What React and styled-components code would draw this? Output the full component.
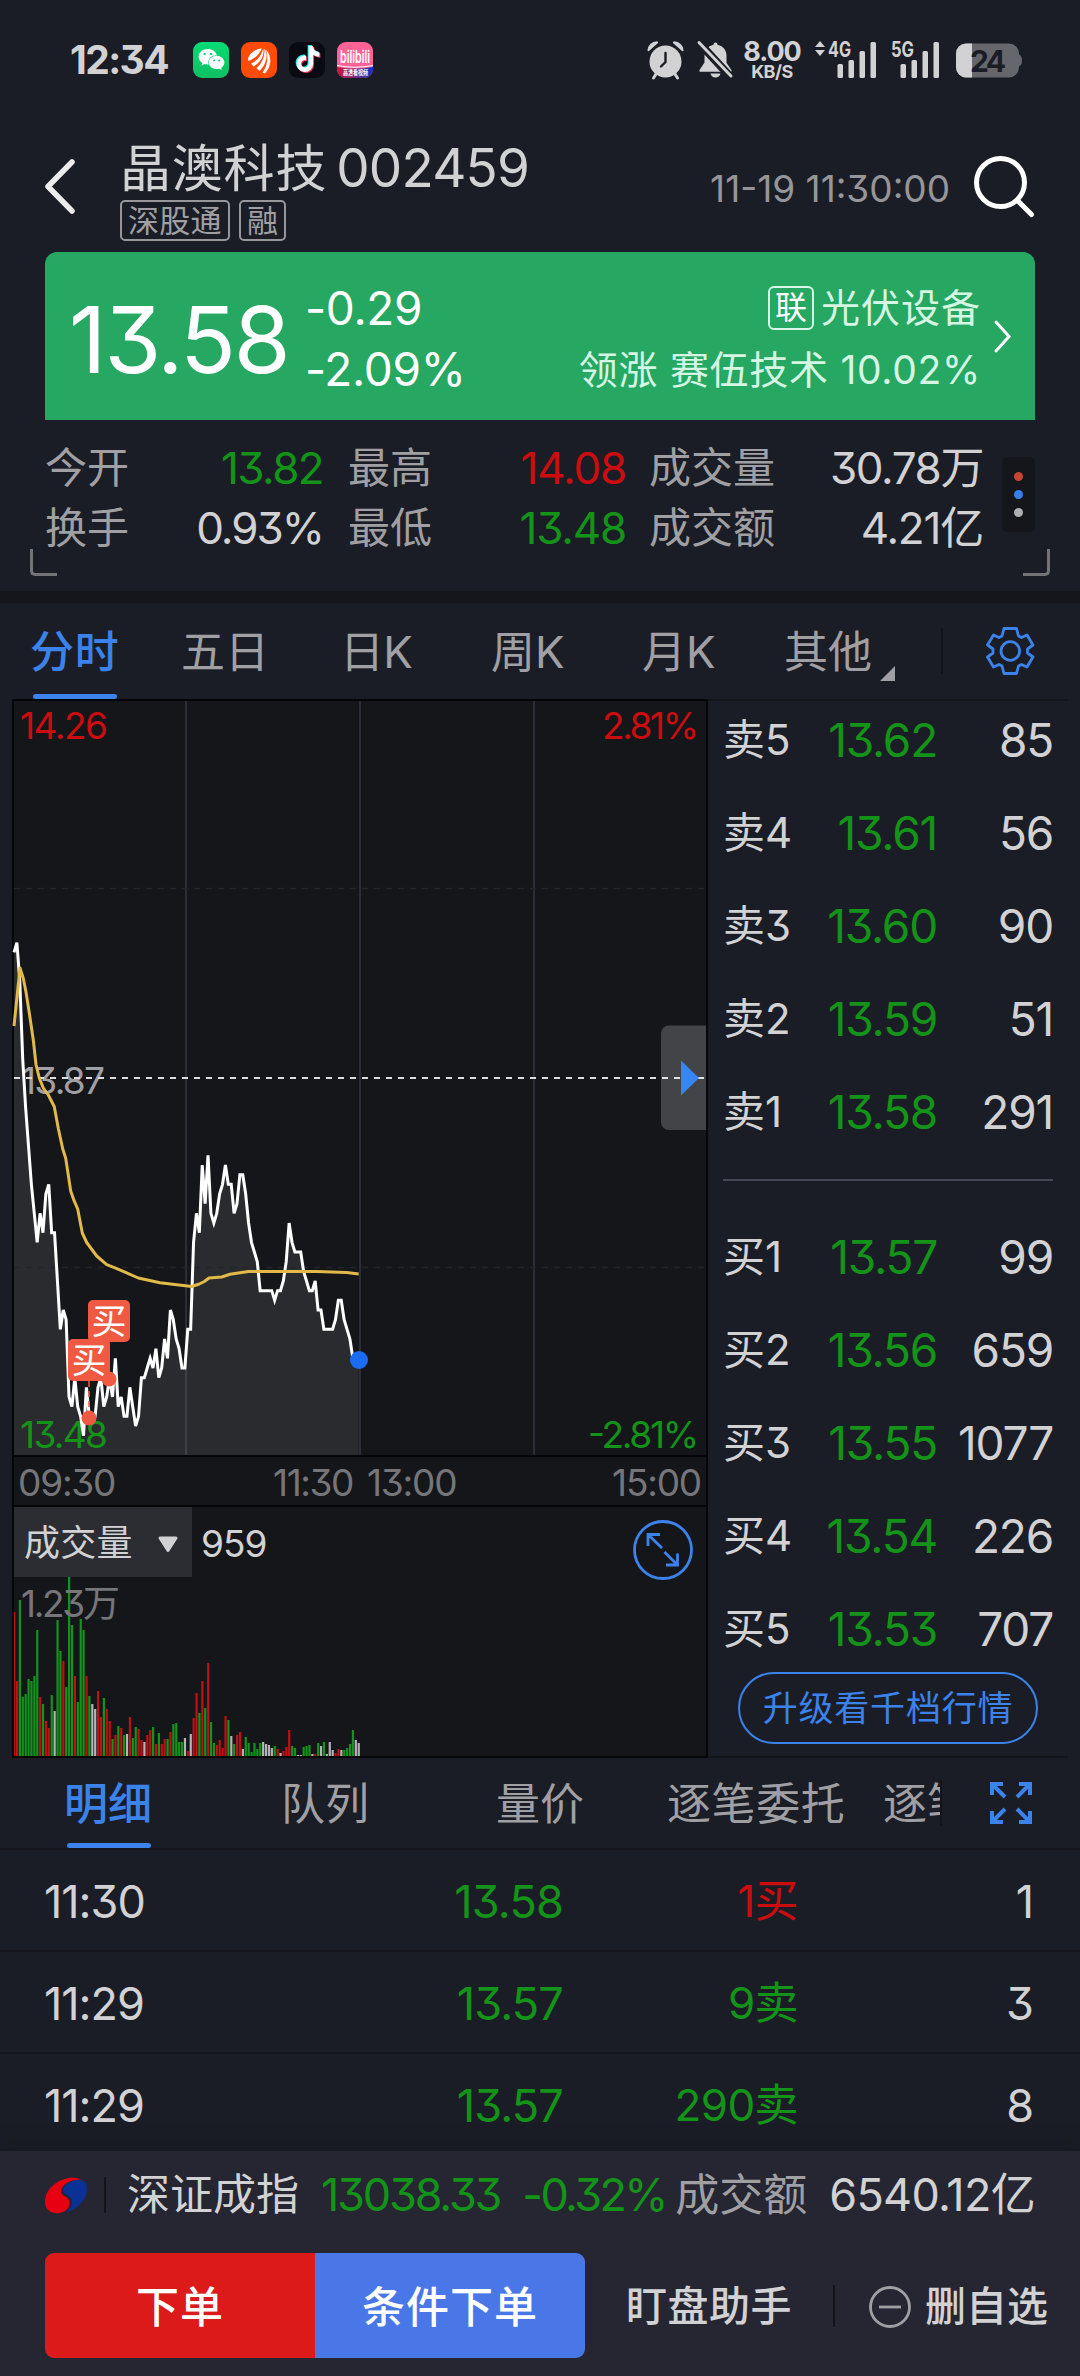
import React from "react";
import styled, { createGlobalStyle } from "styled-components";
import { FaTiktok, FaWeixin } from "react-icons/fa6";

const GREEN = "#149319";
const RED = "#cb0d10";
const BLUE = "#3b83ea";
const TEXT = "#d2d2d4";
const MUTED = "#a0a0a4";

const GlobalStyle = createGlobalStyle`
  * { box-sizing: border-box; }
  body {
    margin: 0;
    background: #1b1d26;
    color: ${TEXT};
    font-family: Inter, "Noto Sans CJK SC", sans-serif;
    font-feature-settings: "cv09" 1;
  }
  svg { display: block; flex: none; overflow: visible; }
`;

const Page = styled.div`
  width: 1080px;
  height: 2376px;
  overflow: hidden;
  display: flex;
  flex-direction: column;
`;

const Label = styled.span`
  flex: none;
  white-space: nowrap;
  line-height: 1.2;
  font-size: ${(p) => p.$size || 44}px;
  letter-spacing: ${(p) => p.$track || 0}px;
  font-weight: ${(p) => p.$weight || 400};
  color: ${(p) => p.$color || TEXT};
  margin-left: ${(p) => p.$left || 0}px;
`;

/* status bar */

const StatusBar = styled.div`
  height: 120px;
  padding: 0 58px 0 70px;
  display: flex;
  align-items: center;
  justify-content: space-between;
`;

const StatusGroup = styled.div`
  display: flex;
  align-items: center;
  gap: ${(p) => p.$gap}px;
`;

const AppTile = styled.div`
  width: 36px;
  height: 36px;
  border-radius: 9px;
  background: ${(p) => p.$bg};
  color: #fff;
  display: flex;
  align-items: center;
  justify-content: center;
`;

const Clock = styled(Label)`
  margin-right: 12px;
  width: 99px;
`;

const NetSpeed = styled.div`
  width: 58px;
  margin-left: -4px;
  padding-top: 1px;
  display: flex;
  flex-direction: column;
  align-items: center;
  color: ${TEXT};

  b {
    font-weight: 700;
    font-size: 27px;
    line-height: 22px;
    letter-spacing: -1px;
  }
  i {
    font-style: normal;
    font-weight: 700;
    font-size: 18px;
    line-height: 17px;
    letter-spacing: -0.5px;
  }
`;

const Battery = styled.svg`
  margin-left: 2px;
`;

/* header */

const Header = styled.div`
  height: 132px;
  padding: 0 45px;
  display: flex;
`;

const BackIcon = styled.svg`
  margin: 37px 43px 0 -2px;
`;

const TitleBlock = styled.div`
  flex: 1;
  padding-top: 18px;
`;

const Title = styled.div`
  height: 62px;
  display: flex;
  align-items: center;
  gap: 9px;
`;

const Tags = styled.div`
  display: flex;
  gap: 9px;
`;

const Tag = styled.span`
  height: 41px;
  padding: 0 6px;
  border: 2px solid #96969b;
  border-radius: 5px;
  color: ${MUTED};
  font-size: 31px;
  line-height: 37px;
  letter-spacing: 0.3px;
`;

const Stamp = styled(Label)`
  margin: 47px 21px 0 0;
`;

const SearchIcon = styled.svg`
  margin-top: 34px;
`;

/* quote card */

const QuoteCard = styled.div`
  height: 168px;
  margin: 0 45px;
  padding: 0 24px;
  border-radius: 12px 12px 0 0;
  background: #26a762;
  display: flex;
  align-items: center;
`;

const Pair = styled.div`
  padding-top: 5px;
  display: flex;
  flex-direction: column;
  align-items: ${(p) => (p.$end ? "flex-end" : "flex-start")};
  margin: ${(p) => (p.$end ? "0 10px 0 auto" : "0")};

  > * {
    height: 61px;
    line-height: 61px;
  }
`;

const Price = styled(Label)`
  width: 235px;
  margin-top: 8px;
`;

const Sector = styled.div`
  display: flex;
  align-items: center;
  gap: 7px;
`;

const LinkBox = styled.span`
  width: 46px;
  height: 44px;
  border: 2px solid #d9f7e6;
  border-radius: 6px;
  color: #fff;
  font-size: 32px;
  line-height: 40px;
  text-align: center;
`;

/* stats */

const Stats = styled.div`
  height: 171px;
  padding: 18px 45px 0;
  display: flex;
  position: relative;
`;

const StatCol = styled.div`
  width: ${(p) => p.$w}px;
  margin-right: ${(p) => p.$gap}px;
`;

const StatRow = styled.div`
  height: 60px;
  display: flex;
  align-items: center;
  justify-content: space-between;
`;

const Dots = styled.div`
  width: 33px;
  height: 75px;
  margin-top: 19px;
  border-radius: 6px;
  background: #15161b;
  display: flex;
  flex-direction: column;
  align-items: center;
  justify-content: center;
  gap: 9px;
`;

const Dot = styled.i`
  width: 9px;
  height: 9px;
  border-radius: 50%;
  background: ${(p) => p.$c};
`;

const Corner = styled.i`
  position: absolute;
  bottom: 15px;
  ${(p) => p.$side}: 30px;
  width: 27px;
  height: 27px;
  border-bottom: 3px solid #737378;
  border-${(p) => p.$side}: 3px solid #737378;
  border-bottom-${(p) => p.$side}-radius: 5px;
`;

const Band = styled.div`
  height: 12px;
  background: #15161b;
`;

/* tabs */

const PeriodTabs = styled.div`
  height: 96px;
  padding: 0 45px 0 30px;
  display: flex;
  align-items: center;
`;

const Tab = styled.div`
  width: ${(p) => p.$w}px;
  height: 100%;
  display: flex;
  flex-direction: column;
  align-items: flex-start;
  overflow: hidden;
  white-space: nowrap;
  font-size: 44px;
  letter-spacing: ${(p) => p.$track || 0}px;
  line-height: ${(p) => p.$lh || 99}px;
  font-weight: ${(p) => (p.$on ? 500 : 400)};
  color: ${(p) => (p.$on ? BLUE : MUTED)};
`;

const TabText = styled.span`
  flex: 1;
  min-height: 0;
`;

const TabMark = styled.i`
  width: 84px;
  height: 5px;
  margin-left: 3px;
  border-radius: 3px;
  background: ${BLUE};
`;

const MoreMark = styled.svg`
  margin: 44px 46px 0 0;
`;

const Rule = styled.i`
  width: 2px;
  height: ${(p) => p.$h}px;
  background: #13141a;
`;

const EndIcon = styled.svg`
  margin-left: auto;
`;

/* chart and order book */

const Market = styled.div`
  height: 1059px;
  padding-left: 12px;
  display: flex;
`;

const ChartPanel = styled.div`
  width: 696px;
  border: 2px solid #05060a;
  background: #15161a;
  display: flex;
  flex-direction: column;
`;

const TimeAxis = styled.div`
  height: 52px;
  border: solid #05060a;
  border-width: 2px 0;
  padding: 4px 5px 0 4px;
  display: grid;
  grid-template-columns: 255px 94px 1fr auto;
  align-items: center;
`;

const VolumeHead = styled.div`
  height: 70px;
  display: flex;
  align-items: center;
`;

const VolumePick = styled.div`
  width: 178px;
  height: 70px;
  padding: 4px 14px 0 10px;
  background: #2c2d33;
  display: flex;
  align-items: center;
  justify-content: space-between;
`;

const VolumeNow = styled(Label)`
  padding-top: 4px;
`;

const Expand = styled.svg`
  margin: 16px 13px 0 auto;
`;

const Book = styled.div`
  flex: 1;
  margin-right: 12px;
  padding: 0 15px;
  border: solid #14151b;
  border-width: 2px 0;
`;

const BookRow = styled.div`
  height: 93px;
  display: grid;
  grid-template-columns: 80px 134px 1fr;
  align-items: center;

  > :nth-child(n + 2) {
    text-align: right;
  }
`;

const BookSide = styled.div`
  margin-top: ${(p) => p.$top}px;
`;

const BookRule = styled.div`
  height: 2px;
  margin-top: 20px;
  background: #474856;
`;

const Upgrade = styled.div`
  height: 72px;
  width: 300px;
  margin: -4px auto 0;
  border: 2px solid ${BLUE};
  border-radius: 36px;
  color: ${BLUE};
  font-size: 35px;
  letter-spacing: 0.8px;
  line-height: 69px;
  text-align: center;
`;

/* trade list */

const DetailTabs = styled.div`
  height: 92px;
  padding: 0 48px 0 64px;
  border-bottom: 2px solid #15161d;
  display: flex;
  align-items: center;
`;

const Trades = styled.div`
  flex: 1;
  overflow: hidden;
`;

const TradeRow = styled.div`
  height: 102px;
  padding: 3px 46px 0 44px;
  border-bottom: 2px solid #15161d;
  display: grid;
  grid-template-columns: 220px 299px 235px 1fr;
  align-items: center;

  > :nth-child(n + 2) {
    text-align: right;
  }
`;

/* footer */

const Footer = styled.div`
  height: 225px;
  background: #252632;
  box-shadow: 0 -4px 16px rgba(20, 21, 28, 0.5);
`;

const IndexRow = styled.div`
  height: 102px;
  padding: 0 45px 14px;
  display: flex;
  align-items: center;

  ${Rule} {
    margin: 0 21px 0 17px;
  }
`;

const Turnover = styled.div`
  margin-left: auto;
  display: flex;
  align-items: center;
`;

const Actions = styled.div`
  height: 105px;
  padding-left: 45px;
  display: flex;
  align-items: center;
`;

const OrderButton = styled.div`
  width: 270px;
  height: 105px;
  border-radius: ${(p) => (p.$left ? "9px 0 0 9px" : "0 9px 9px 0")};
  background: ${(p) => p.$bg};
  color: #fff;
  font-size: 43px;
  letter-spacing: 1px;
  font-weight: 500;
  line-height: 109px;
  text-align: center;
`;

const Watch = styled(Label)`
  margin: 3px 41px 0;
`;

const Remove = styled.div`
  margin-left: 34px;
  padding-top: 2px;
  display: flex;
  align-items: center;
  gap: 14px;
`;

// hundredths below the previous close, one value a minute
const PREV = 13.87;
const drops = [
  -13, -14, -10, -2, 3, 7, 11, 14, 17, 14, 16, 12, 11, 16, 16, 21, 26, 24, 25,
  33, 34, 31, 34, 35, 37, 32, 35, 35, 35, 32, 31, 34, 33, 31, 33, 29, 34, 33,
  35, 35, 32, 34, 36, 35, 31, 31, 30, 29, 30, 28, 31, 30, 27, 29, 24, 25, 27,
  28, 30, 30, 26, 26, 17, 14, 16, 9, 13, 8, 14, 15, 14, 12, 11, 9, 11, 11, 14,
  13, 10, 10, 12, 15, 17, 18, 19, 22, 22, 22, 22, 22, 23, 22, 22, 21, 19, 15,
  17, 18, 18, 18, 20, 21, 22, 22, 21, 24, 24, 26, 26, 26, 26, 25, 23, 23, 25,
  26, 27, 29, 29, 29,
];

const STEP = 2.896;
const TICK = 9.667;
const MID = 377;
const linePoints = drops.map((d, i) => `${i * STEP},${MID + d * TICK}`).join(" ");

const average =
  "0,325 6,267 9.3,277.5 12,291 15.3,312 19.3,339 22,363.5 25.3,377 29.3,387 34.3,394 40.3,405.7 44.3,427.5 48.7,447.8 51.7,457.3 56.7,490 60,499.4 63.7,508 68.3,532 72.7,541.5 82.7,555 92.7,563.7 101,566.8 112.7,571.8 124.3,577 146,581.7 177.7,585.5 185.3,583 190.3,580.5 195,577 207.7,576 216,573.3 234.3,570.6 302.7,570.6 332.7,571.4 344.7,573";

// direction of the minute, then its height
const volumes =
  "r144 r75 g156 g59 g62 g77 g75 g80 g126 r59 g52 r35 r28 g61 w45 g136 g105 r95 g69 g183 g131 r80 g54 g137 g126 r80 g60 w52 w47 r65 r39 g58 r47 r35 g17 r21 g30 r28 g21 w22 r39 g18 g29 r27 r16 w14 r21 r26 g29 r12 g23 r12 r17 g17 r24 g32 g33 g14 g14 w18 r5 w22 r38 r63 g43 r75 g48 r93 g34 g13 r11 r16 r8 r40 g36 w20 g12 r21 r24 w7 g19 g13 g4 g13 g7 g13 w14 w12 w11 w8 g10 r7 w3 r5 r9 r26 g10 g8 w1 w1 g9 g10 g11 w2 r2 g13 w10 g14 w2 w14 w6 r3 r7 w6 g6 g8 g12 g26 w16 w13".split(
    " "
  );
const volumeFill = { r: "#c20f12", g: "#12951a", w: "#b4b4b7" };

const asks = [
  ["卖5", "13.62", "85"],
  ["卖4", "13.61", "56"],
  ["卖3", "13.60", "90"],
  ["卖2", "13.59", "51"],
  ["卖1", "13.58", "291"],
];
const bids = [
  ["买1", "13.57", "99"],
  ["买2", "13.56", "659"],
  ["买3", "13.55", "1077"],
  ["买4", "13.54", "226"],
  ["买5", "13.53", "707"],
];
const trades = [
  ["11:30", "13.58", "1买", "1", RED],
  ["11:29", "13.57", "9卖", "3", GREEN],
  ["11:29", "13.57", "290卖", "8", GREEN],
];

const Signal = ({ name, arrows }) => (
  <svg width={arrows ? 62 : 49} height="38" viewBox={arrows ? "-13 0 62 38" : "0 0 49 38"} fill={TEXT}>
    {arrows && <path d="M-8 0l5 6h-10zM-8 15l5-6h-10z" />}
    <text x="0" y="16" fontSize="21" fontWeight="700" textLength="23" lengthAdjust="spacingAndGlyphs">
      {name}
    </text>
    <rect x="9.500" y="23" width="5.500" height="14" rx="1.500" />
    <rect x="20.500" y="19" width="5.500" height="18" rx="1.500" />
    <rect x="31.500" y="10" width="5.500" height="27" rx="1.500" />
    <rect x="42.500" y="1" width="5.500" height="36" rx="1.500" />
  </svg>
);

const Status = () => (
  <StatusBar>
    <StatusGroup $gap={12}>
      <Clock $size={39} $weight={700} $track={-1.6}>12:34</Clock>
      <AppTile $bg="linear-gradient(#07dc74, #0fc062)">
        <FaWeixin size={27} />
      </AppTile>
      <AppTile $bg="#ff4a08">
        <svg width="36" height="36" viewBox="0 0 36 36" fill="#fff">
          <path d="M7 17C8 11.500 13 7.500 21 6.200 18 12.500 14 16.500 7.500 19Z" />
          <path d="M10 21.500C17 18.500 20.800 12.500 22.200 6.500 23.800 13 19.500 21 12.500 24.500Z" />
          <path d="M15.500 26C21.500 21 23.800 14 23.500 6.500 27.800 13 25.300 22.500 18.500 29Z" />
          <path d="M21.500 30.500C26.500 24 27.500 15 25 7.500 31 14 31 24 24 31.500Z" />
        </svg>
      </AppTile>
      <AppTile $bg="#090a12">
        <svg width="36" height="36" viewBox="0 0 36 36">
          <FaTiktok x="5" y="3" size={26} color="#25e6e6" />
          <FaTiktok x="7" y="5" size={26} color="#f0385a" />
          <FaTiktok x="6" y="4" size={26} color="#fff" />
        </svg>
      </AppTile>
      <AppTile $bg="#ff6396">
        <svg width="36" height="36" viewBox="0 0 36 36">
          <defs>
            <linearGradient id="strip">
              <stop offset="0" stopColor="#d3153b" />
              <stop offset="1" stopColor="#0b35c9" />
            </linearGradient>
            <clipPath id="tile">
              <rect width="36" height="36" rx="9" />
            </clipPath>
          </defs>
          <text x="3" y="21" fill="#fff" fontSize="17" fontWeight="600" textLength="30" lengthAdjust="spacingAndGlyphs">
            bilibili
          </text>
          <path d="M0 25Q18 28 36 25V36H0Z" fill="url(#strip)" clipPath="url(#tile)" />
          <path d="M0 23.500Q18 27 36 23.500" fill="none" stroke="#fff" />
          <text x="6" y="33" fill="#fff" fontSize="7" fontWeight="700" textLength="25" lengthAdjust="spacingAndGlyphs">
            高清看视频
          </text>
        </svg>
      </AppTile>
    </StatusGroup>
    <StatusGroup $gap={14}>
      <svg width="37" height="38" viewBox="0 0 37 38" fill={TEXT}>
        <path d="M.4 9.500A9.500 9.500 0 0 1 10 .3Q11.500.8 11 2L2 10Q1 10.500.4 9.500ZM36.600 9.500A9.500 9.500 0 0 0 27 .3Q25.500.8 26 2L35 10Q36 10.500 36.600 9.500Z" />
        <circle cx="18.500" cy="20.500" r="16" />
        <path d="M9 33l-2.500 4M28 33l2.500 4" stroke={TEXT} strokeWidth="3" strokeLinecap="round" />
        <path d="M18.500 12v9l-4.500 4.500" stroke="#1b1d26" strokeWidth="2.400" fill="none" strokeLinecap="round" />
      </svg>
      <svg width="35" height="38" viewBox="0 0 35 38" fill={TEXT}>
        <path d="M17.500 1.500q2 0 2 2.200c6 1.300 9 6 9 11v7l5 7.500v1.500H1.500V29l5-7.500v-7c0-5 3-9.500 9-10.800q0-2.200 2-2.200Z" />
        <path d="M12.500 32.500h10q-1 4-5 4t-5-4Z" />
        <path d="M-1-.5 34 37.500" stroke="#1b1d26" strokeWidth="8" />
        <path d="M1 1.500 33 35" stroke={TEXT} strokeWidth="3" strokeLinecap="round" />
      </svg>
      <NetSpeed>
        <b>8.00</b>
        <i>KB/S</i>
      </NetSpeed>
      <Signal name="4G" arrows />
      <Signal name="5G" />
      <Battery width="66" height="38" viewBox="0 0 66 38">
        <defs>
          <clipPath id="cell">
            <rect width="63" height="34" y="2.500" rx="10" />
          </clipPath>
        </defs>
        <path d="M61 13q5 0 5 6.500T61 26Z" fill="#66676c" />
        <g clipPath="url(#cell)">
          <path d="M0 0h63v38H0Z" fill="#66676c" />
          <path d="M0 0h16v38H0Z" fill={TEXT} />
        </g>
        <text x="14" y="31" fontSize="30" fontWeight="700" fill="#1b1d26" textLength="36">
          24
        </text>
      </Battery>
    </StatusGroup>
  </StatusBar>
);

const PriceChart = () => (
  <svg width="692" height="754" viewBox="0 0 692 754">
    <path d="M172 0V754M346 0V754M520 0V754" stroke="#2c2d38" strokeWidth="2" />
    <polygon points={`0,754 ${linePoints} ${119 * STEP},754`} fill="rgba(255,255,255,.09)" />
    <path d="M0 187.500H690M0 566.500H690" stroke="#24252b" strokeWidth="1.500" strokeDasharray="6 6" />
    <g fontSize="37" fill={MUTED}>
      <text x="7" y="393" textLength="84">
        {PREV.toFixed(2)}
      </text>
      <text x="6" y="38" fill={RED} textLength="88">
        14.26
      </text>
      <text x="588" y="38" fill={RED} textLength="97">
        2.81%
      </text>
      <text x="574" y="747" fill={GREEN} textLength="111">
        -2.81%
      </text>
      <text x="6" y="747" fill={GREEN} textLength="88">
        13.48
      </text>
    </g>
    <path d="M0 377H692" stroke="#dddde0" strokeWidth="2" strokeDasharray="6 6" />
    <polyline points={linePoints} fill="none" stroke="#fff" strokeWidth="3" />
    <polyline points={average} fill="none" stroke="#e2ba49" strokeWidth="3" strokeLinejoin="round" />
    <path d="M75 680V717" stroke="#f05a42" strokeWidth="1.500" strokeDasharray="6 4" />
    <g fill="#f05a42">
      <circle cx="95" cy="678" r="7.500" />
      <circle cx="75" cy="717" r="7.500" />
      <rect x="74" y="599" width="42" height="42" rx="5" />
      <rect x="54" y="638" width="42" height="42" rx="5" />
    </g>
    <g fontSize="35" fill="#fff">
      <text x="77.500" y="633">
        买
      </text>
      <text x="57.500" y="672">
        买
      </text>
    </g>
    <circle cx="345" cy="659" r="9" fill="#1a6cf5" />
    <path d="M692 324.500H655a8 8 0 0 0-8 8V421a8 8 0 0 0 8 8H692Z" fill="#fff" opacity=".2" />
    <path d="M667 359.500 685 377 667 394.500Z" fill="#3a85f5" />
  </svg>
);

const VolumeChart = () => (
  <svg width="692" height="179" viewBox="0 0 692 179">
    <defs>
      <clipPath id="plot">
        <rect width="692" height="179" />
      </clipPath>
    </defs>
    <g clipPath="url(#plot)">
      {volumes.map((v, i) => (
        <rect
          key={i}
          x={i * STEP - 1}
          y={179 - Number(v.slice(1))}
          width="2.200"
          height={v.slice(1)}
          fill={volumeFill[v[0]]}
        />
      ))}
    </g>
    <text x="7" y="40" fontSize="37" fill="#76767a" textLength="99">
      1.23万
    </text>
  </svg>
);

const Levels = ({ rows }) =>
  rows.map(([name, price, qty]) => (
    <BookRow key={name}>
      <Label $size={42}>{name}</Label>
      <Label $size={46} $track={-1.2} $color={GREEN}>{price}</Label>
      <Label $size={46} $track={-1.2}>{qty}</Label>
    </BookRow>
  ));

const Stat = ({ name, value, color, track = -1.6 }) => (
  <StatRow>
    <Label $size={42} $color={MUTED}>{name}</Label>
    <Label $color={color} $track={track}>{value}</Label>
  </StatRow>
);

const TabItem = ({ w, on, lh, track, children }) => (
  <Tab $w={w} $on={on} $lh={lh} $track={track}>
    <TabText>{children}</TabText>
    {on && <TabMark />}
  </Tab>
);

const App = () => (
  <Page>
    <GlobalStyle />
    <Status />
    <Header>
      <BackIcon width="34" height="60" viewBox="0 0 34 60" fill="none" stroke="#ececed" strokeWidth="5.500" strokeLinecap="round" strokeLinejoin="round">
        <path d="M29 5 5 29.500 29 54" />
      </BackIcon>
      <TitleBlock>
        <Title>
          <Label $size={51} $track={0.8}>晶澳科技</Label>
          <Label $size={53} $track={-0.8}>002459</Label>
        </Title>
        <Tags>
          <Tag>深股通</Tag>
          <Tag>融</Tag>
        </Tags>
      </TitleBlock>
      <Stamp $size={37} $color="#96969a">11-19 11:30:00</Stamp>
      <SearchIcon width="64" height="64" viewBox="0 0 64 64" fill="none" stroke="#fff" strokeWidth="5" strokeLinecap="round">
        <circle cx="29.500" cy="28.500" r="24" />
        <path d="M46.500 46.500 60.500 60.500" />
      </SearchIcon>
    </Header>

    <QuoteCard>
      <Price $size={92} $color="#fff" $track={-2.2}>13.58</Price>
      <Pair>
        <Label $size={46} $left={1} $color="#fff" $track={-0.3}>-0.29</Label>
        <Label $size={46} $left={1} $color="#fff" $track={-0.3}>-2.09%</Label>
      </Pair>
      <Pair $end>
        <Sector>
          <LinkBox>联</LinkBox>
          <Label $size={39} $track={1} $color="#d4f6e3">光伏设备</Label>
        </Sector>
        <Label $size={39} $track={0.7} $color="#d4f6e3">领涨 赛伍技术 10.02%</Label>
      </Pair>
      <svg width="20" height="36" viewBox="0 0 20 36" fill="none" stroke="#fff" strokeWidth="3" strokeLinecap="round">
        <path d="M5 4 18 18.500 5 33" />
      </svg>
    </QuoteCard>

    <Stats>
      <StatCol $w={278} $gap={25}>
        <Stat name="今开" value="13.82" color={GREEN} />
        <Stat name="换手" value="0.93%" track={-2} />
      </StatCol>
      <StatCol $w={278} $gap={23}>
        <Stat name="最高" value="14.08" color={RED} track={-1.2} />
        <Stat name="最低" value="13.48" color={GREEN} track={-1.2} />
      </StatCol>
      <StatCol $w={334} $gap={19}>
        <Stat name="成交量" value="30.78万" track={-1.4} />
        <Stat name="成交额" value="4.21亿" track={-1.2} />
      </StatCol>
      <Dots>
        <Dot $c="#c84533" />
        <Dot $c="#3680eb" />
        <Dot $c="#b0b0b3" />
      </Dots>
      <Corner $side="left" />
      <Corner $side="right" />
    </Stats>
    <Band />

    <PeriodTabs>
      <TabItem w={151} track={0.8} on>分时</TabItem>
      <TabItem w={159}>五日</TabItem>
      <TabItem w={151} track={-0.8}>日K</TabItem>
      <TabItem w={151}>周K</TabItem>
      <TabItem w={142}>月K</TabItem>
      <TabItem w={96}>其他</TabItem>
      <MoreMark width="15" height="15" viewBox="0 0 15 15" fill={MUTED}>
        <path d="M15 0V15H0Z" />
      </MoreMark>
      <Rule $h={46} />
      <EndIcon width="49" height="48" viewBox="0 0 49 48" fill="none" stroke={BLUE} strokeWidth="2.800" strokeLinejoin="round">
        <path d="M18 1.500H30.500L32.500 9 35.500 10.500 41 8 47 18 41.500 22V26L47 30 41 40 35.500 37.500 32.500 39 30.500 46.500H18L16 39 13 37.500 7.500 40 1.500 30 7 26V22L1.500 18 7.500 8 13 10.500 16 9Z" />
        <circle cx="24.300" cy="24" r="9.300" />
      </EndIcon>
    </PeriodTabs>

    <Market>
      <ChartPanel>
        <PriceChart />
        <TimeAxis>
          <Label $size={37} $track={-1.2} $color="#76767a">09:30</Label>
          <Label $size={37} $track={-1.4} $color="#76767a">11:30</Label>
          <Label $size={37} $track={-1.2} $color="#76767a">13:00</Label>
          <Label $size={37} $track={-1.2} $color="#76767a">15:00</Label>
        </TimeAxis>
        <VolumeHead>
          <VolumePick>
            <Label $size={36} $track={0.3}>成交量</Label>
            <svg width="20" height="17" viewBox="0 0 20 17" fill={TEXT} stroke={TEXT} strokeWidth="3" strokeLinejoin="round">
              <path d="M2 2H18L10 14.500Z" />
            </svg>
          </VolumePick>
          <VolumeNow $size={37} $left={9} $track={-1}>959</VolumeNow>
          <Expand width="60" height="60" viewBox="0 0 60 60" fill="none" stroke={BLUE} strokeWidth="2.800">
            <circle cx="30" cy="30" r="28.500" />
            <path d="M15 26V14.500H27M15 14.500 29 28M33 45H44.500V33.500M31.500 32 44.500 45" />
          </Expand>
        </VolumeHead>
        <VolumeChart />
      </ChartPanel>
      <Book>
        <BookSide $top={-7}>
          <Levels rows={asks} />
        </BookSide>
        <BookRule />
        <BookSide $top={30}>
          <Levels rows={bids} />
        </BookSide>
        <Upgrade>升级看千档行情</Upgrade>
      </Book>
    </Market>

    <DetailTabs>
      <TabItem w={217} lh={93} on>明细</TabItem>
      <TabItem w={215} lh={93}>队列</TabItem>
      <TabItem w={171} lh={93}>量价</TabItem>
      <TabItem w={216} lh={93} track={0.6}>逐笔委托</TabItem>
      <TabItem w={57} lh={93}>逐笔</TabItem>
      <Rule $h={46} />
      <EndIcon width="42" height="42" viewBox="0 0 42 42" fill="none" stroke={BLUE} strokeWidth="4">
        <path d="M2 13V2H13M2 2 15 15M29 2H40V13M40 2 27 15M2 29V40H13M2 40 15 27M29 40H40V29M40 40 27 27" />
      </EndIcon>
    </DetailTabs>

    <Trades>
      {trades.map(([time, price, side, count, color], i) => (
        <TradeRow key={i}>
          <Label $size={45} $track={-1}>{time}</Label>
          <Label $size={45} $track={-0.8} $color={GREEN}>{price}</Label>
          <Label $size={44} $track={-0.6} $color={color}>{side}</Label>
          <Label $size={45}>{count}</Label>
        </TradeRow>
      ))}
    </Trades>

    <Footer>
      <IndexRow>
        <svg width="42" height="38" viewBox="0 0 42 38">
          <path d="M37 4C24-3 0 8 0 26c0 9 8 12 14 11 9-1 12-8 10-13-2-4-8-4-8-9C17 8 27 3 37 4Z" fill="#e60012" />
          <path d="M38 4.500C29 2 18 8 18 14c0 5 8 5 9 11 .5 5-3 9-6 11.500C34 33 42 22 42 13q0-6-4-8.500Z" fill="#0a3194" />
        </svg>
        <Rule $h={36} />
        <Label $size={43}>深证成指</Label>
        <Label $size={45} $track={-2.2} $left={22} $color={GREEN}>13038.33</Label>
        <Label $size={45} $track={-2.6} $left={22} $color={GREEN}>-0.32%</Label>
        <Turnover>
          <Label $size={44} $color={MUTED}>成交额</Label>
          <Label $size={45} $track={-0.7} $left={22}>6540.12亿</Label>
        </Turnover>
      </IndexRow>
      <Actions>
        <OrderButton $left $bg="#dc1a1a">下单</OrderButton>
        <OrderButton $bg="#4a77e8">条件下单</OrderButton>
        <Watch $size={41} $track={0.5} $weight={500}>盯盘助手</Watch>
        <Rule $h={42} />
        <Remove>
          <svg width="42" height="42" viewBox="0 0 42 42" fill="none" stroke={MUTED} strokeWidth="2.800">
            <circle cx="21" cy="21" r="19.500" />
            <path d="M10 21H32" />
          </svg>
          <Label $size={41} $weight={500}>删自选</Label>
        </Remove>
      </Actions>
    </Footer>
  </Page>
);

export default App;
